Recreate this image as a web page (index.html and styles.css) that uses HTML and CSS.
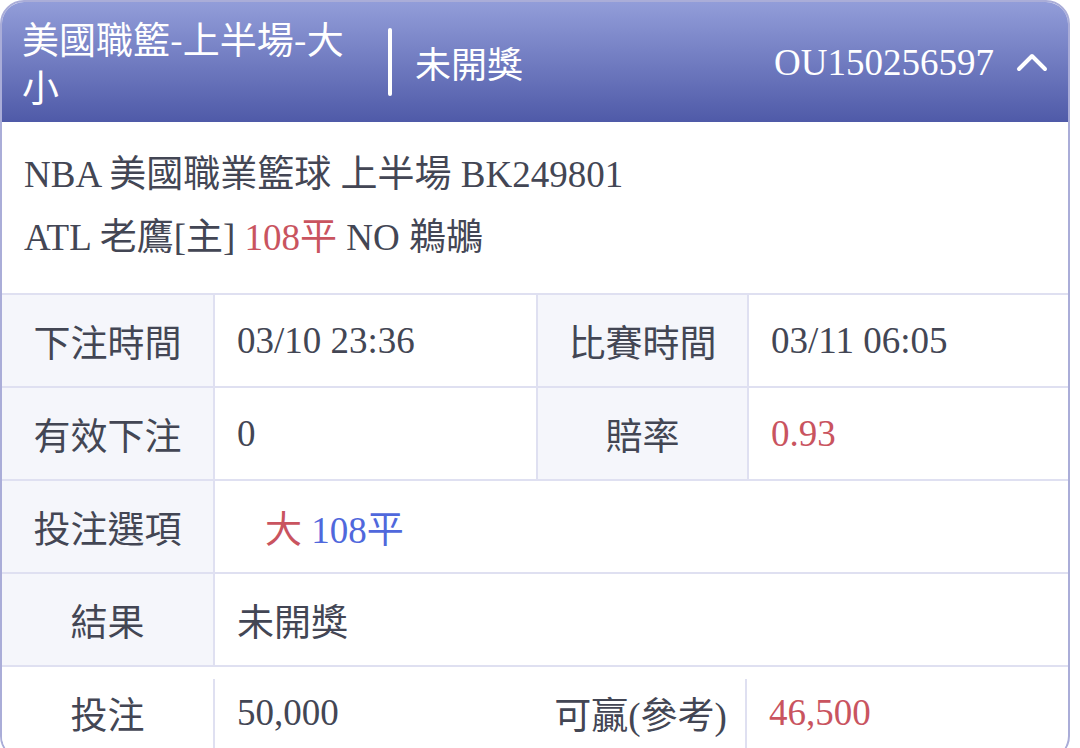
FILE: index.html
```html
<!DOCTYPE html>
<html lang="zh-Hant">
<head>
    <meta charset="UTF-8">
    <meta name="viewport" content="width=device-width, initial-scale=1.0">
    <title>注單詳情</title>
    <link rel="stylesheet" href="styles.css">
</head>
<body>
    <div class="bet-card">
        <div class="bet-header">
            <div class="bet-title">美國職籃-上半場-大小</div>
            <div class="bet-divider"></div>
            <div class="bet-status">未開獎</div>
            <div class="bet-no">OU150256597</div>
            <svg class="bet-toggle" viewBox="0 0 32 20" width="32" height="20">
                <polyline points="3,17 16,4 29,17" fill="none" stroke="#fff" stroke-width="4" stroke-linecap="round" stroke-linejoin="round"/>
            </svg>
        </div>
        <div class="bet-match">
            <div>NBA 美國職業籃球 上半場 BK249801</div>
            <div>ATL 老鷹[主] <span class="red">108平</span> NO 鵜鶘</div>
        </div>
        <div class="bet-grid">
            <div class="label">下注時間</div>
            <div class="value">03/10 23:36</div>
            <div class="label">比賽時間</div>
            <div class="value">03/11 06:05</div>

            <div class="label">有效下注</div>
            <div class="value">0</div>
            <div class="label">賠率</div>
            <div class="value red">0.93</div>

            <div class="label">投注選項</div>
            <div class="value wide"><span class="pick"><span class="red">大</span> <span class="blue">108平</span></span></div>

            <div class="label">結果</div>
            <div class="value wide">未開獎</div>
        </div>
        <div class="bet-foot">
            <div class="label">投注</div>
            <div class="value">50,000</div>
            <div class="label">可贏(參考)</div>
            <div class="value red">46,500</div>
        </div>
    </div>
</body>
</html>
```

FILE: styles.css
```css
body {
    margin: 0;
    background: #fff;
    font-family: "Liberation Serif", "Noto Sans CJK TC", serif;
    color: #434654;
}
.bet-card {
    width: 1070px;
    box-sizing: border-box;
    border: 2px solid #aaadd8;
    border-radius: 24px;
    overflow: hidden;
    background: #fff;
}
.bet-header {
    display: flex;
    align-items: center;
    height: 120px;
    padding: 0 20px 0 20px;
    background: linear-gradient(to bottom, #929dd9, #4f5aa8);
    color: #fff;
}
.bet-title {
    flex: none;
    width: 330px;
    font-family: "Noto Sans CJK TC", sans-serif;
    font-size: 37px;
    line-height: 48px;
}
.bet-divider {
    flex: none;
    width: 4px;
    height: 68px;
    margin-left: 36px;
    border-radius: 2px;
    background: #fff;
}
.bet-status {
    margin-left: 23px;
    font-family: "Noto Sans CJK TC", sans-serif;
    font-size: 36px;
}
.bet-no {
    margin-left: auto;
    font-size: 37px;
}
.bet-toggle {
    margin-left: 22px;
}
.bet-match {
    padding: 21px 22px 24px;
    font-size: 37px;
    line-height: 63px;
}
.bet-grid,
.bet-foot {
    display: grid;
    grid-template-columns: 211px 321px 209px 319px;
}
.bet-grid {
    grid-auto-rows: 91px;
    gap: 2px;
    border-top: 2px solid #dfe0f1;
    border-bottom: 2px solid #dfe0f1;
    background: #dfe0f1;
}
.label,
.value {
    display: flex;
    align-items: center;
    font-size: 37px;
}
.label {
    justify-content: center;
    background: #f5f6fb;
}
.value {
    padding-left: 22px;
    background: #fff;
}
.value.wide {
    grid-column: span 3;
}
.pick {
    margin-left: 28px;
}
.bet-foot {
    grid-template-columns: 211px 323px 209px 321px;
    height: 91px;
}
.bet-foot .label {
    background: #fff;
}
.bet-foot .value {
    margin-top: 12px;
    padding-bottom: 12px;
    border-left: 2px solid #dfe0f1;
}
.red {
    color: #c9545f;
}
.blue {
    color: #5068dc;
}
```
